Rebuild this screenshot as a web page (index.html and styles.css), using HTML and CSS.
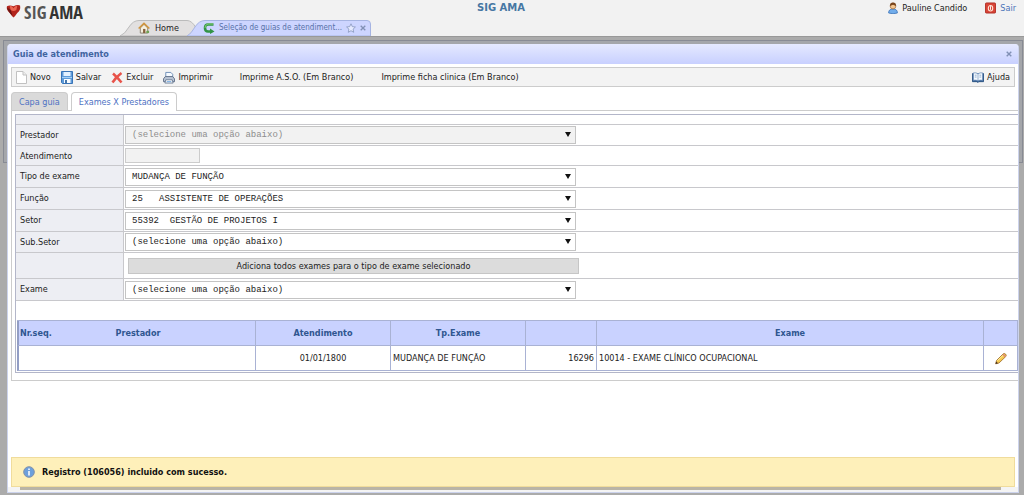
FILE: index.html
```html
<!DOCTYPE html>
<html lang="pt-BR">
<head>
<meta charset="utf-8">
<title>SIG AMA</title>
<link rel="stylesheet" href="styles.css">
</head>
<body>
<header class="top">
  <div class="brand">
    <svg class="brand-mark" viewBox="0 0 16 14" aria-hidden="true"><path d="M1 2 Q4 0 8 2 Q12 0 15 1 Q16 6 12 9 Q10 12 8 14 Q6 12 4 9 Q0 6 1 2Z" fill="#b3241c"/><path d="M4 2 Q6 1 8 4 Q10 1 12 2 L11 6 Q8 8 5 6Z" fill="#ec6652"/><path d="M1 3 L5 6 L7 12Q2 8 1 3Z" fill="#6e1512"/></svg>
    <span class="brand-text">SIG<b>AMA</b></span>
  </div>
  <h1 class="app-title">SIG AMA</h1>
  <nav class="page-tabs">
    <a class="page-tab" href="#home">
      <svg class="tab-shape" viewBox="0 0 76 16" preserveAspectRatio="none" aria-hidden="true"><path d="M0 16 Q5 14 9 7 Q13 .5 19 .5 H67 Q72 .5 76 8 L70 16Z" fill="#e2e0e0" stroke="#bbb"/></svg>
      <svg class="icon tab-icon" viewBox="0 0 13 12" aria-hidden="true"><path d="M2.500 6 V11.500 H10.500 V6 L6.500 2Z" fill="#f6f0df" stroke="#8a8170"/><path d="M.7 6.500 L6.500 1 L12.300 6.500" fill="none" stroke="#cf943d" stroke-width="1.700"/><path d="M5.500 7h2.500v4.500H5.500z" fill="#85603c"/><path d="M9 9h3v2.500H9z" fill="#70a254"/></svg>
      <span>Home</span>
    </a>
    <a class="page-tab page-tab-active" href="#guias">
      <svg class="tab-shape" viewBox="0 0 184 16" preserveAspectRatio="none" aria-hidden="true"><path d="M0 16 Q4 14 8 7 Q12 .5 18 .5 H180 Q183.500 .5 183.500 4 V16Z" fill="#cdd5ff" stroke="#a6b4e2"/></svg>
      <svg class="icon tab-icon" viewBox="0 0 12 12" aria-hidden="true"><path d="M10.500 2.500 H5 Q2 2.500 2 6 Q2 9.500 5 9.500 H8" fill="none" stroke="#329447" stroke-width="2.600"/><path d="M10 2H5Q2 2.500 2 6" fill="none" stroke="#82cd72"/><path d="M7 6.500 L11.500 9.500 L7 12Z" fill="#329447"/></svg>
      <span class="tab-label">Seleção de guias de atendiment...</span>
      <svg class="star" viewBox="0 0 10 10" aria-hidden="true"><path d="M5 .8 L6.300 3.600 L9.400 4 L7.100 6.100 L7.700 9.300 L5 7.700 L2.300 9.300 L2.900 6.100 L.6 4 L3.700 3.600Z" fill="#e5eaff" stroke="#8796bd" stroke-width=".8"/></svg>
      <svg class="cross" viewBox="0 0 6 6" aria-hidden="true"><path d="M.7 .7 L5.300 5.300 M5.300 .7 L.7 5.300" stroke="#8190b5" stroke-width="1.300"/></svg>
    </a>
  </nav>
  <div class="user">
    <a class="user-name" href="#user">
      <svg class="icon user-icon" viewBox="0 0 10 12" aria-hidden="true"><path d="M.6 11 Q.5 7 5 7 Q9.500 7 9.400 11 Q5 12.500 .6 11Z" fill="#72adeb" stroke="#3e75b9" stroke-width=".8"/><circle cx="5" cy="4" r="2.900" fill="#f5c892" stroke="#8c5525" stroke-width=".6"/><path d="M2 4 Q2 .6 5 .6 Q8 .6 8 4 Q6 3 5 2.700 Q4 3 2 4Z" fill="#79451b"/></svg>
      <span>Pauline Candido</span>
    </a>
    <a class="logout" href="#sair">
      <svg class="icon exit-icon" viewBox="0 0 12 12" aria-hidden="true"><rect x=".5" y=".5" width="11" height="11" rx="1" fill="#d94537" stroke="#ad2c24"/><ellipse cx="6" cy="6.200" rx="2.400" ry="3" fill="none" stroke="#ffe6d9" stroke-width="1.200"/><path d="M6 4v4" stroke="#fff"/></svg>
      <span>Sair</span>
    </a>
  </div>
</header>
<main class="workspace">
  <div class="backdrop-panel"></div>
  <section class="window">
    <div class="window-title">
      <h2>Guia de atendimento</h2>
      <button class="close" type="button" aria-label="Fechar"><svg class="cross" viewBox="0 0 6 6" aria-hidden="true"><path d="M.7 .7 L5.300 5.300 M5.300 .7 L.7 5.300" stroke="#8190b5" stroke-width="1.400"/></svg></button>
    </div>
    <div class="toolbar">
      <button class="tool" type="button"><svg class="icon" viewBox="0 0 12 13" aria-hidden="true"><path d="M1.500 .5 H8 L11.500 4 V12.500 H1.500Z" fill="#fff" stroke="#c1c1c1"/><path d="M8 .5V4H11.500" fill="#eee" stroke="#c1c1c1"/></svg>Novo</button>
      <button class="tool" type="button"><svg class="icon" viewBox="0 0 12 13" aria-hidden="true"><path d="M.5 .5H11.500V12.500H1.500L.5 11.500Z" fill="#5e9bda" stroke="#3974b7"/><path d="M2.500 1H9.500V5H2.500z" fill="#e3f1ff"/><path d="M3 8H9.500V12H3z" fill="#f9fcff"/><path d="M4 9h2v3H4z" fill="#4677ab"/><path d="M1 6.500h10" stroke="#a5d0f5"/></svg>Salvar</button>
      <button class="tool" type="button"><svg class="icon" viewBox="0 0 12 13" aria-hidden="true"><path d="M2 2.500 Q7 7 10.500 11.500 M10.500 2 Q5 6 1.500 11.500" fill="none" stroke="#e8534a" stroke-width="2.500"/></svg>Excluir</button>
      <button class="tool" type="button"><svg class="icon" viewBox="0 0 13 13" aria-hidden="true"><path d="M3 6V1H8.500L10.500 3V6" fill="#f5faff" stroke="#6a8bb5"/><path d="M2.500 5.500H10.500L12.500 8V11H.5V8Z" fill="#b9c4d4" stroke="#5c6c85"/><path d="M3 9H10L11 12.500H2Z" fill="#fff" stroke="#697b94"/><path d="M4 11h5" stroke="#68a2dd"/></svg>Imprimir</button>
      <button class="tool tool-plain" type="button">Imprime A.S.O. (Em Branco)</button>
      <button class="tool tool-plain" type="button">Imprime ficha clinica (Em Branco)</button>
      <button class="tool tool-help" type="button"><svg class="icon" viewBox="0 0 13 12" aria-hidden="true"><path d="M.5 1.500V10.500H5.500L6.500 11.500L7.500 10.500H12.500V1.500" fill="#3e669c" stroke="#27507f"/><path d="M1.500 1Q4.500 .5 6.500 2Q8.500 .5 11.500 1V9Q8.500 8.500 6.500 9.500Q4.500 8.500 1.500 9Z" fill="#f5faff" stroke="#6388b6" stroke-width=".8"/><path d="M6.500 2V9.500M3 3.500H5M3 5.500H5M8 3.500H10M8 5.500H10" stroke="#7596bd" stroke-width=".8"/></svg>Ajuda</button>
    </div>
    <div class="body">
      <nav class="form-tabs">
        <button class="form-tab" type="button">Capa guia</button>
        <button class="form-tab form-tab-active" type="button">Exames X Prestadores</button>
      </nav>
      <div class="panel">
        <form class="form">
          <div class="row row-thin"><span class="label"></span></div>
          <div class="row row-snug">
            <label class="label" for="prestador">Prestador</label>
            <div class="field"><div class="picker"><select id="prestador" disabled><option>(selecione uma opção abaixo)</option></select></div></div>
          </div>
          <div class="row row-short">
            <label class="label" for="atendimento">Atendimento</label>
            <div class="field"><input class="code" id="atendimento" type="text" disabled></div>
          </div>
          <div class="row">
            <label class="label" for="tipo">Tipo de exame</label>
            <div class="field"><div class="picker"><select id="tipo"><option>MUDANÇA DE FUNÇÃO</option></select></div></div>
          </div>
          <div class="row">
            <label class="label" for="funcao">Função</label>
            <div class="field"><div class="picker"><select id="funcao"><option>25&nbsp;&nbsp; ASSISTENTE DE OPERAÇÕES</option></select></div></div>
          </div>
          <div class="row">
            <label class="label" for="setor">Setor</label>
            <div class="field"><div class="picker"><select id="setor"><option>55392&nbsp; GESTÃO DE PROJETOS I</option></select></div></div>
          </div>
          <div class="row row-snug">
            <label class="label" for="subsetor">Sub.Setor</label>
            <div class="field"><div class="picker"><select id="subsetor"><option>(selecione uma opção abaixo)</option></select></div></div>
          </div>
          <div class="row row-tall">
            <span class="label"></span>
            <div class="field"><button class="add-all" type="button">Adiciona todos exames para o tipo de exame selecionado</button></div>
          </div>
          <div class="row">
            <label class="label" for="exame">Exame</label>
            <div class="field"><div class="picker"><select id="exame"><option>(selecione uma opção abaixo)</option></select></div></div>
          </div>
          <div class="grid-area">
            <table class="exams">
              <colgroup><col class="c-seq"><col class="c-prest"><col class="c-date"><col class="c-type"><col class="c-num"><col><col class="c-edit"></colgroup>
              <thead><tr><th class="seq">Nr.seq.</th><th class="prest">Prestador</th><th>Atendimento</th><th>Tp.Exame</th><th></th><th>Exame</th><th></th></tr></thead>
              <tbody><tr><td class="seq"></td><td></td><td class="center">01/01/1800</td><td>MUDANÇA DE FUNÇÃO</td><td class="right">16296</td><td>10014 - EXAME CLÍNICO OCUPACIONAL</td><td class="center"><button class="edit" type="button" aria-label="Editar"><svg class="icon" viewBox="0 0 12 12" aria-hidden="true"><path d="M.7 11.300 L1.500 8 L8 1.500 Q9 .5 10.500 1.500 Q11.800 2.800 10.800 4 L4 10.500Z" fill="#f5c94f" stroke="#a87631" stroke-width=".9"/><path d="M2.500 8 L8.500 2.500" stroke="#fff0a6"/><path d="M8 1.700 L10.500 4.300" stroke="#df8b76" stroke-width="1.500"/><path d="M.6 11.400L1.200 9L3 10.800Z" fill="#443123"/></svg></button></td></tr></tbody>
            </table>
          </div>
        </form>
      </div>
    </div>
    <div class="message" role="status">
      <svg class="icon" viewBox="0 0 12 12" aria-hidden="true"><circle cx="6" cy="6" r="5.300" fill="#6c9fdc" stroke="#8191a9"/><path d="M6 5V9.500M6 2.500V4" stroke="#fff" stroke-width="1.500"/></svg>
      <span>Registro (106056) incluido com sucesso.</span>
    </div>
    <div class="scroll-track"><div class="scroll-thumb"></div></div>
  </section>
</main>
</body>
</html>
```

FILE: styles.css
```css
* { box-sizing: border-box; }
body {
  margin: 0;
  height: 100vh;
  display: flex;
  flex-direction: column;
  overflow: hidden;
  background: #ababab;
  color: #222;
  font: 9px/12px "DejaVu Sans Condensed", Tahoma, sans-serif;
}
a { color: inherit; text-decoration: none; }
button { padding: 0; border: 0; background: none; color: inherit; font: inherit; }
.icon { width: 12px; height: 13px; flex: none; display: block; }
.cross { width: 6px; height: 6px; flex: none; display: block; fill: none; }

.top {
  display: grid;
  grid-template-columns: 1fr auto 1fr;
  grid-template-rows: 20px 16px;
  background: #f2f2f2;
  flex: none;
}
.brand { display: flex; align-items: flex-start; gap: 3px; padding: 4px 0 0 6px; height: 20px; }
.brand-mark { width: 15px; height: 14px; }
.brand-text { font: 300 18px/16px "Open Sans Condensed", "Roboto Condensed", "Liberation Sans Narrow", sans-serif; color: #555; }
.brand-text b { color: #333; margin-left: 3px; }
.app-title { margin: 0; padding: 2px 22px 0 0; font: bold 10px/12px "DejaVu Sans", Verdana, sans-serif; color: #4677a3; }
.user { grid-column: 3; grid-row: 1; justify-self: end; display: flex; gap: 18px; padding: 1px 8px 0 0; }
.user a { display: flex; align-items: center; gap: 4px; height: 13px; }
.user .user-icon { width: 10px; height: 12px; }
.user .exit-icon { width: 11px; height: 12px; }
.logout { color: #4a72b8; }
.page-tabs { grid-column: 1 / 4; grid-row: 2; display: flex; padding-left: 120px; }
.page-tab { position: relative; display: flex; align-items: center; gap: 5px; width: 76px; height: 16px; padding-left: 18px; color: #222; white-space: nowrap; }
.page-tab-active { width: 184px; margin-left: -9px; padding: 0 5px 0 16px; color: #5872a8; gap: 4px; font-size: 8px; }
.page-tab > * { position: relative; }
.page-tab > .tab-shape { position: absolute; inset: 0; width: 100%; height: 100%; }
.tab-icon { height: 12px; }
.tab-label { flex: 1; }
.star { width: 10px; height: 10px; flex: none; }

.workspace { position: relative; flex: 1; min-height: 0; display: flex; padding: 7px 5px 2px 7px; border-top: 1px solid #999; }
.backdrop-panel { position: absolute; inset: 3px 1px auto 3px; height: 123px; border: 1px solid #888b94; background: #a4a6aa; }
.window {
  position: relative;
  flex: 1;
  min-width: 0;
  display: flex;
  flex-direction: column;
  background: #fff;
  border: 1px solid #ccd3ec;
  border-top: 0;
  border-radius: 4px 4px 0 0;
  overflow: hidden;
}
.window-title {
  height: 20px;
  flex: none;
  display: flex;
  align-items: center;
  justify-content: space-between;
  padding: 0 6px 0 5px;
  background: linear-gradient(#e5e9ff, #c8d0ff);
  color: #41649f;
}
.window-title h2 { margin: 0; font-size: 9px; line-height: 12px; }
.toolbar {
  display: flex;
  align-items: center;
  flex: none;
  height: 20px;
  margin: 3px 3px 0;
  padding: 0 4px 0 3px;
  border: 1px solid #ccc;
  background: #f3f3f3;
}
.tool { display: flex; align-items: center; gap: 3px; margin-right: 10px; white-space: nowrap; }
.tool-plain { margin: 0 11px 0 17px; }
.tool-help { margin: 0 0 0 auto; }

.body { flex: 1; min-height: 0; overflow: hidden; padding: 5px 0 0 3px; }
.form-tabs { display: flex; gap: 3px; }
.form-tab { height: 18px; padding: 0 7px; border: 1px solid #ccc; border-bottom: 0; border-radius: 4px 4px 0 0; background: #dadada; color: #4e72c3; white-space: nowrap; }
.form-tab-active { background: #fff; position: relative; z-index: 1; height: 19px; margin-bottom: -1px; }
.panel { border: 1px solid #ccc; border-right: 0; padding: 3px 0 7px 3px; }
.form { border: 1px solid #b3b6c9; border-right: 0; }
.row { display: grid; grid-template-columns: 108px 1fr; height: 22px; border-bottom: 1px solid #c8c8cc; }
.row-thin { height: 10px; }
.row-short { height: 20px; }
.row-snug { height: 21px; }
.row-tall { height: 26px; }
.label { padding: 4px 4px 0; border-right: 1px solid #c8c8cc; background: #edeef3; }
.field { display: flex; align-items: center; padding-left: 1px; }
.picker { position: relative; width: 451px; height: 18px; }
.picker::after { content: ""; position: absolute; right: 5px; top: 6px; border: 3px solid transparent; border-top: 5px solid #111; border-bottom: 0; }
.picker select {
  display: block;
  width: 100%;
  height: 100%;
  padding: 0 16px 0 6px;
  appearance: none;
  border: 1px solid #c4c4c4;
  border-radius: 0;
  background: #fff;
  color: #222;
  opacity: 1;
  font: 9px/14px "Liberation Mono", "Courier New", monospace;
}
.picker select:disabled { background: #f2f2f2; color: #8d8d8d; }
.code { width: 75px; height: 15px; padding: 0 4px; border: 1px solid #ccc; background: #f2f2f2; }
.add-all { width: 451px; height: 16px; margin-left: 3px; border: 1px solid #c6c6c6; background: #dcdcdc; }

.grid-area { padding: 19px 0 1px 1px; }
.exams { width: 100%; table-layout: fixed; border-collapse: separate; border-spacing: 0; border-top: 1px solid #a9b2d4; }
.exams th, .exams td { height: 25px; padding: 0 2px; border-right: 1px solid #a9b2d4; border-bottom: 1px solid #a9b2d4; white-space: nowrap; text-align: left; }
.exams th { background: #c9d2ff; color: #2f5690; text-align: center; }
.exams .seq { border-left: 2px solid #939ec5; border-right: 0; padding: 0 1px; text-align: left; }
.exams .prest { padding-right: 36px; }
.exams .center { text-align: center; }
.exams .right { text-align: right; }
.c-seq { width: 38px; }
.c-prest { width: 201px; }
.c-date { width: 135px; }
.c-type { width: 135px; }
.c-num { width: 71px; }
.c-edit { width: 34px; }
.edit { display: inline-block; vertical-align: middle; }

.message {
  display: flex;
  align-items: center;
  gap: 7px;
  flex: none;
  height: 30px;
  margin: 0 3px;
  padding-left: 11px;
  border: 1px solid #f0dc9c;
  background: #fef0ba;
  color: #111;
  font-weight: bold;
}
.message .icon { height: 12px; }
.scroll-track { flex: none; height: 5px; padding: 0 17px 0 12px; background: #f4f4f4; }
.scroll-thumb { height: 3px; background: #b9b4a6; }
```
